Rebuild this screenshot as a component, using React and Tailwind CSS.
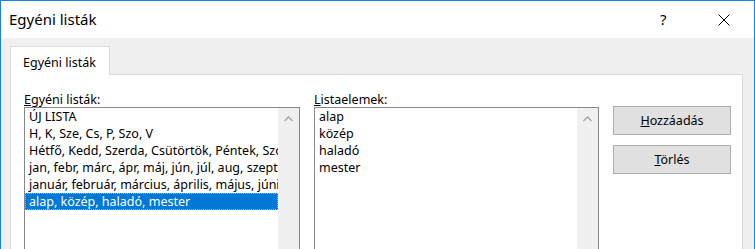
import React from 'react';

const leftItems = [
  'ÚJ LISTA',
  'H, K, Sze, Cs, P, Szo, V',
  'Hétfő, Kedd, Szerda, Csütörtök, Péntek, Szombat, Vasárnap',
  'jan, febr, márc, ápr, máj, jún, júl, aug, szept, okt, nov, dec',
  'január, február, március, április, május, június, július',
  'alap, közép, haladó, mester',
];

const rightItems = ['alap', 'közép', 'haladó', 'mester'];

const ScrollBar = () => (
  <div className="w-[21px] shrink-0 bg-[#f0f0f0] flex justify-center pt-[8px]">
    <svg width="9" height="6" viewBox="0 0 9 6">
      <path d="M0.5 5 L4.5 1 L8.5 5" fill="none" stroke="#a3a3a3" strokeWidth="1.3" />
    </svg>
  </div>
);

const App = () => {
  return (
    <div
      className="w-[755px] h-[249px] overflow-hidden border-l border-t border-r border-[#1883d7] bg-[#f0f0f0] flex flex-col text-black"
      style={{ fontFamily: '"Noto Sans", sans-serif' }}
    >
      {/* title bar */}
      <div className="h-[37px] shrink-0 bg-white flex items-center">
        <span className="pl-[8px] text-[15px] flex-1">Egyéni listák</span>
        <span className="text-[15px] w-[10px] mr-[48px]">?</span>
        <svg width="12" height="12" viewBox="0 0 12 12" className="mr-[24px]">
          <path d="M0.5 0.5 L11.5 11.5 M11.5 0.5 L0.5 11.5" stroke="#000" strokeWidth="1" />
        </svg>
      </div>

      {/* tab area */}
      <div className="flex-1 pt-[8px] pl-[9px] flex flex-col">
        <div className="w-[100px] h-[29px] -mb-px relative z-10 bg-white border-l border-t border-r border-[#d9d9d9] text-[12.5px] pl-[12px] pt-[7px] leading-[17px]">
          Egyéni listák
        </div>
        <div className="w-[733px] flex-1 bg-white border border-[#d9d9d9] pl-[13px] pt-[15px] flex text-[12.5px] leading-[17px]">
          <div className="w-[276px] flex flex-col">
            <div className="h-[17px] pt-[1px]">
              <span className="underline">E</span>gyéni listák:
            </div>
            <div className="h-[200px] border border-[#828790] flex">
              <div className="flex-1 min-w-0 overflow-hidden">
                {leftItems.map((item, i) => (
                  <div
                    key={i}
                    className={
                      'h-[17px] pl-[4px] pt-[1px] leading-[16px] whitespace-nowrap overflow-hidden ' +
                      (i === 5 ? 'bg-[#0078d7] text-white outline outline-1 outline-dotted outline-[#f3a53c] -outline-offset-1' : '')
                    }
                  >
                    {item}
                  </div>
                ))}
              </div>
              <ScrollBar />
            </div>
          </div>

          <div className="w-[285px] ml-[14px] flex flex-col">
            <div className="h-[17px] pt-[1px]">
              <span className="underline">L</span>istaelemek:
            </div>
            <div className="h-[200px] border border-[#828790] flex">
              <div className="flex-1 min-w-0">
                {rightItems.map((item) => (
                  <div key={item} className="h-[17px] pl-[4px] pt-[1px] leading-[16px]">
                    {item}
                  </div>
                ))}
              </div>
              <ScrollBar />
            </div>
          </div>

          <div className="ml-[14px] mt-[16px] flex flex-col gap-[10px]">
            <button className="w-[118px] h-[29px] border border-[#adadad] bg-[#e1e1e1] text-[12.5px]">
              <span className="underline">H</span>ozzáadás
            </button>
            <button className="w-[118px] h-[29px] border border-[#adadad] bg-[#e1e1e1] text-[12.5px]">
              <span className="underline">T</span>örlés
            </button>
          </div>
        </div>
      </div>
    </div>
  );
};

export default App;
